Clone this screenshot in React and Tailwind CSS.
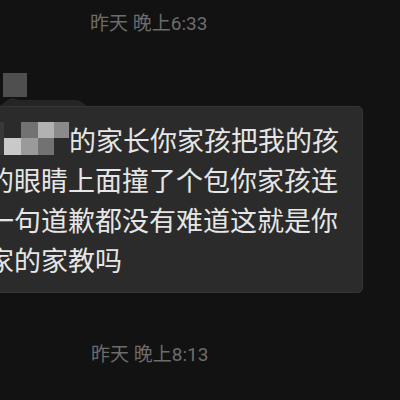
import React from "react";

const FONT = { fontFamily: '"Noto Sans CJK SC", "Noto Sans", sans-serif' };
const TS_FONT = { fontFamily: 'Roboto, "Noto Sans CJK SC", sans-serif' };

function Mosaic() {
  const row1 = ["bg-[#383838]", "bg-[#2b2b2b]", "bg-[#727272]", "bg-[#b2b2b2]", "bg-[#8a8a8a]"];
  const row2 = ["bg-[#383838]", "bg-[#c9c9c9]", "bg-[#9a9a9a]", "bg-[#727272]", "bg-[#2b2b2b]"];
  const widths = ["w-[17px]", "w-[17px]", "w-[17px]", "w-[16px]", "w-[15px]"];
  return (
    <div className="w-[82px] h-[40px] shrink-0 flex flex-col pt-[2px]">
      <div className="flex h-[16px]">
        {row1.map((c, i) => (
          <div key={i} className={`${widths[i]} h-full ${c}`} />
        ))}
      </div>
      <div className="flex h-[17px]">
        {row2.map((c, i) => (
          <div key={i} className={`${widths[i]} h-full ${c}`} />
        ))}
      </div>
    </div>
  );
}

export default function App() {
  return (
    <div
      className="w-[400px] h-[400px] bg-[#121212] overflow-hidden flex flex-col"
      style={FONT}
    >
      <div
        className="h-[48px] pl-[90px] pt-[12px] text-[19px] leading-[24px] text-[#6c6c6c] whitespace-nowrap"
        style={TS_FONT}
      >
        昨天 晚上6:33
      </div>
      <div className="mt-[25px] ml-[3px] w-[24px] h-[24px] bg-[#4f4f4f]" />
      <svg width="88" height="9" viewBox="0 0 88 9" className="block">
        <path d="M0 9 L9 2 L13 1 L19 3 L74 3 L80 4 L87 9 Z" fill="#252525" />
      </svg>
      <div className="ml-[-30px] w-[393px] rounded-[5px] bg-[#2b2b2b] border border-[#353535] pt-[13px] pb-[12px] pl-[16px] pr-[21px] text-[27px] leading-[40px] text-[#e6e6e6] whitespace-nowrap">
        <div className="flex items-center h-[40px]">
          <Mosaic />
          <span>的家长你家孩把我的孩</span>
        </div>
        <div className="h-[40px]">的眼睛上面撞了个包你家孩连</div>
        <div className="h-[40px]">一句道歉都没有难道这就是你</div>
        <div className="h-[40px]">家的家教吗</div>
      </div>
      <div
        className="mt-[50px] pl-[91px] text-[19px] leading-[24px] text-[#6c6c6c] whitespace-nowrap"
        style={TS_FONT}
      >
        昨天 晚上8:13
      </div>
    </div>
  );
}
